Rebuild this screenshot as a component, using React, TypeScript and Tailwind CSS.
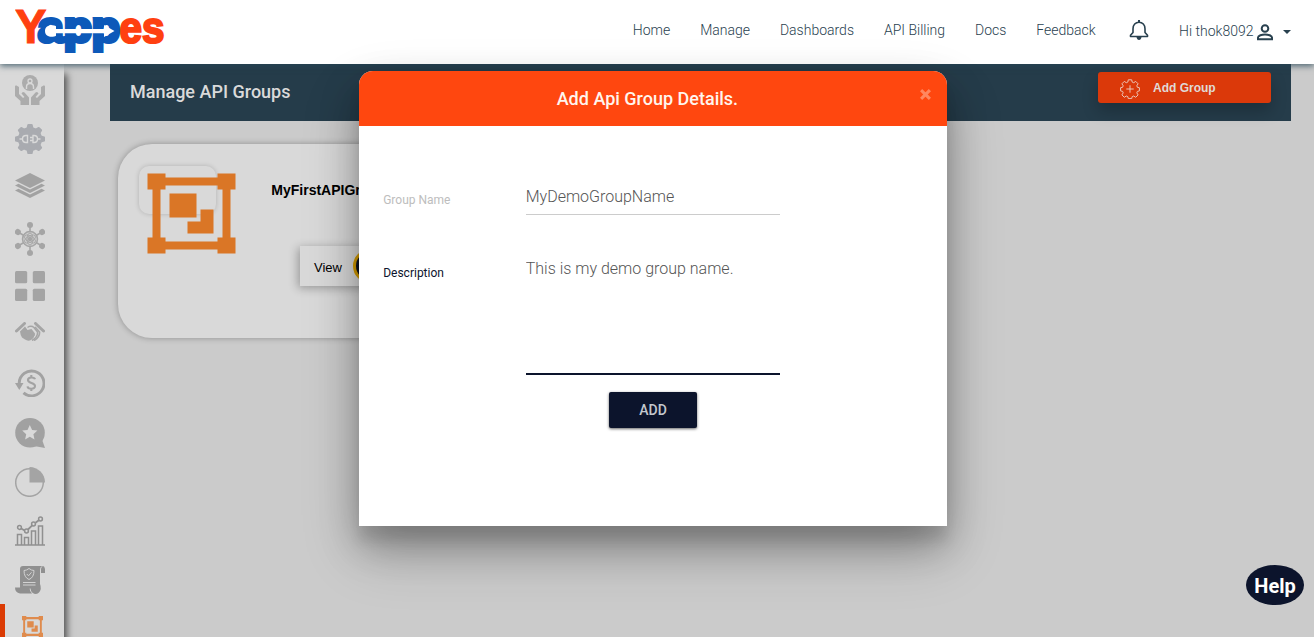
import React from "react";

const navItems = ["Home", "Manage", "Dashboards", "API Billing", "Docs", "Feedback"];

function Logo() {
  return (
    <svg width="160" height="64" viewBox="0 -8 160 64" className="block" aria-label="Yappes">
      <g fontFamily="Liberation Sans, sans-serif" fontWeight="700">
        <text x="0" y="34.500" fontSize="48" textLength="31.500" lengthAdjust="spacingAndGlyphs" fill="#ff4010" stroke="#ff4010" strokeWidth="1">Y</text>
        <text x="23" y="34.300" fontSize="43" textLength="82" lengthAdjust="spacingAndGlyphs" fill="#0d59b9" stroke="#0d59b9" strokeWidth="4">app</text>
        <text x="104.500" y="35" fontSize="44" textLength="45" lengthAdjust="spacingAndGlyphs" fill="#ff4010" stroke="#ff4010" strokeWidth="2.200">es</text>
      </g>
      <path d="M41 18.300C38 16.500 30 16.500 30 23s8 6.500 11 4.700V25.200H89v3.800l10.500-6L89 17v4H41Z" fill="#fff" />
    </svg>
  );
}

function GroupIcon({ className }: { className: string }) {
  return (
    <svg viewBox="0 0 88 80" preserveAspectRatio="none" className={className} fill="currentColor">
      <path fillRule="evenodd" d="M0 0h18v4h52V0h18v16h-5v48h5v16H70v-4H18v4H0V64h5V16H0ZM18 12v4h-5v48h5v4h52v-4h5V16h-5v-4Z" />
      <path d="M22 20h27v24H22ZM53 36h13v24H40V48h13Z" />
    </svg>
  );
}

function HandsIcon() {
  return (
    <svg viewBox="0 0 30 30" className="block h-[30px] w-[30px]" fill="#acacac">
      <circle cx="15" cy="8" r="8" />
      <circle cx="15" cy="6" r="2" fill="none" stroke="#d9d9d9" strokeWidth="1.300" />
      <path d="M11.500 14v-2q0-3.500 3.500-3.500t3.500 3.500v2" fill="none" stroke="#d9d9d9" strokeWidth="1.400" />
      <path d="M0 11.500Q0 10 1.500 10.500L4 12v7l4 4 1.500-1-3-3.500q1-2.500 3-1l4.500 5V30H5.500v-4L0 21ZM30 11.500q0-1.500-1.500-1L26 12v7l-4 4-1.500-1 3-3.500q-1-2.500-3-1L16 22.500V30h8.500v-4l5.500-5Z" />
    </svg>
  );
}

function PlugGearIcon() {
  return (
    <svg viewBox="0 0 30 30" className="block h-[30px] w-[30px]" fill="#a9abb0">
      <circle cx="15" cy="15" r="12" />
      {[0, 45, 90, 135, 180, 225, 270, 315].map((a) => (
        <path key={a} d="M11.300 5 12.400.6Q12.600 0 13.300 0h3.400q.7 0 .9.600L18.700 5Z" transform={`rotate(${a} 15 15)`} />
      ))}
      <g fill="none" stroke="#d9d9d9" strokeWidth="1.400">
        <path d="M4.500 15h3M12.500 11.500v7h-1.500q-3.500 0-3.500-3.500t3.500-3.500ZM25.500 15h-3M18 11.500v7h1q3.500 0 3.500-3.500T19 11.500ZM15 13.500h3M15 16.500h3" />
      </g>
    </svg>
  );
}

function LayersIcon() {
  return (
    <svg viewBox="0 0 30 25" className="block h-[25px] w-[30px]" fill="#a2a2a2">
      <path d="M15 0 30 7.500 15 15 0 7.500ZM0 12.500l3.500-1.700L15 16.500l11.500-5.700 3.500 1.700L15 20ZM0 17.500l3.500-1.700L15 21.500l11.500-5.700 3.500 1.700L15 25Z" />
    </svg>
  );
}

function NetworkIcon() {
  return (
    <svg viewBox="0 0 30 34" className="block h-[34px] w-[30px]">
      {[0, 60, 120, 180, 240, 300].map((a) => (
        <g key={a} transform={`rotate(${a} 15 17)`}>
          <path d="M15 3v7" stroke="#a5a5a5" strokeWidth="1.600" />
          <circle cx="15" cy="3" r="3" fill="#a5a5a5" />
        </g>
      ))}
      <circle cx="15" cy="17" r="7.500" fill="#cecece" stroke="#a5a5a5" strokeWidth="1.500" />
      <g fill="none" stroke="#a5a5a5" strokeWidth="1">
        <ellipse cx="15" cy="17" rx="3" ry="6" />
        <ellipse cx="15" cy="17" rx="3" ry="6" transform="rotate(60 15 17)" />
        <ellipse cx="15" cy="17" rx="3" ry="6" transform="rotate(120 15 17)" />
      </g>
      <circle cx="15" cy="17" r="2.200" fill="#a5a5a5" />
    </svg>
  );
}

function GridIcon() {
  return (
    <svg viewBox="0 0 30 30" className="block h-[30px] w-[30px]" fill="#a4a4a4">
      <rect width="12.200" height="12.200" rx="1.500" />
      <rect x="17.800" width="12.200" height="12.200" rx="1.500" />
      <rect y="17.800" width="12.200" height="12.200" rx="1.500" />
      <rect x="17.800" y="17.800" width="12.200" height="12.200" rx="1.500" />
    </svg>
  );
}

function HandshakeIcon() {
  return (
    <svg viewBox="0 0 30 19" className="block h-[19px] w-[30px]">
      <path d="M1.500 9 9.500 1.500M28.500 9l-8-7.500" stroke="#a5a5a5" strokeWidth="3" strokeLinecap="round" />
      <path d="M10 4.500 5 9.500q.5 4 2 6l3 2q3 2 6 .5l3-2.500q1.500-1.500 1-4L16.500 7l-4 1Z" fill="#a5a5a5" />
      <path d="M12.500 5.500Q16 3 19 5.500l3.500 4.500q.500 5-5.500 8.500" fill="none" stroke="#a5a5a5" strokeWidth="1.500" />
      <path d="M13 6.500q3-2 5 .5l2.500 3.500q.5 3-1.500 5" fill="none" stroke="#d9d9d9" strokeWidth="1" />
      <path d="m20 5 4.500 5q.5 5-5.500 8.500" fill="none" stroke="#a5a5a5" strokeWidth="1.700" />
    </svg>
  );
}

function RefundIcon() {
  return (
    <svg viewBox="0 0 30 28" className="block h-[28px] w-[30px]" fill="none" stroke="#a2a2a2">
      <path d="M4.200 14A12.400 12.400 0 1 1 8.500 23.800" strokeWidth="2.900" />
      <path d="M0 14h8.500l-4.200 7Z" fill="#a2a2a2" stroke="none" />
      <path d="M20 10.300C19.500 8 13 7.500 13 11c0 3.500 7 2.500 7 6 0 3.800-7 3.300-7.500.3M16.300 6v2.500M16.300 19v3" strokeWidth="2.100" />
    </svg>
  );
}

function StarChatIcon() {
  return (
    <svg viewBox="0 0 30 30" className="block h-[30px] w-[30px]" fill="#a1a1a1">
      <circle cx="15" cy="14.800" r="14.800" />
      <path d="m19 28 8-6.500 3 8.500Z" />
      <path d="m14.800 7 2.300 4.900 5.300.6-4 3.700 1.100 5.300-4.700-2.700-4.700 2.700 1.100-5.300-4-3.700 5.300-.6Z" fill="#d9d9d9" />
    </svg>
  );
}

function PieIcon() {
  return (
    <svg viewBox="0 0 30 30" className="block h-[30px] w-[30px]">
      <circle cx="14.500" cy="15.500" r="13.800" fill="none" stroke="#a4a4a4" strokeWidth="1.500" />
      <path d="M14.500 0A15.300 15.300 0 0 1 30 15.500H14.500Z" fill="#a4a4a4" />
    </svg>
  );
}

function AnalyticsIcon() {
  return (
    <svg viewBox="0 0 30 30" className="block h-[30px] w-[30px]" fill="none" stroke="#909090" strokeWidth="1.500">
      <path d="M0 29h30M2.500 29V18.500h4V29M9.500 29v-7.500h4V29M16.500 29V15h4v14M23.500 29V10h4v19" />
      <path d="m6.200 12.500 3.400 2M13 13.500l4.200-4.200M20.500 6.800l3.300-2.500" strokeWidth="1.800" />
      <circle cx="4.500" cy="11.500" r="1.900" />
      <circle cx="11.500" cy="15" r="1.900" />
      <circle cx="18.500" cy="8" r="1.900" />
      <circle cx="25.500" cy="3" r="1.900" />
    </svg>
  );
}

function PolicyIcon() {
  return (
    <svg viewBox="0 0 30 28" className="block h-[28px] w-[30px]" fill="#909090">
      <path d="M8 0h19q-2 1-2 4v14q2 5-1 8.500-1.500 1.500-4 1.500-4-1-4.500-5.500H5V3q0-3 3-3ZM26 7V3q.5-3 2-3t2 3v4ZM0 21.500h14.500q0 4 2.500 6H5q-5-1-5-6Z" />
      <path d="M14 2.500q2.500 2 5 2 0 7-5 9-5-2-5-9 2.500 0 5-2ZM11.800 8l1.700 1.800 3-3.500M8 16.500h12.500M8 19h12.500" fill="none" stroke="#d2d2d2" strokeWidth="1" />
    </svg>
  );
}

function Sidebar() {
  return (
    <aside className="relative h-[573px] w-16 shrink-0 bg-[#d9d9d9] shadow-[3px_10px_7px_rgba(0,0,0,0.6)]">
      <nav className="flex h-full flex-col overflow-hidden pl-[15px] pt-[11px]">
        <div><HandsIcon /></div>
        <div className="mt-[19px]"><PlugGearIcon /></div>
        <div className="mt-[19px]"><LayersIcon /></div>
        <div className="mt-6"><NetworkIcon /></div>
        <div className="mt-[15px]"><GridIcon /></div>
        <div className="mt-[21px]"><HandshakeIcon /></div>
        <div className="mt-7"><RefundIcon /></div>
        <div className="mt-[21px]"><StarChatIcon /></div>
        <div className="mt-[19px]"><PieIcon /></div>
        <div className="mt-[19px]"><AnalyticsIcon /></div>
        <div className="mt-5"><PolicyIcon /></div>
        <div className="-ml-[15px] mt-2.5 h-[33px] shrink-0 border-l-[5px] border-[#db3b04] pl-[17px] pt-3">
          <GroupIcon className="block h-[21px] w-[21px] text-[#df8b4d]" />
        </div>
      </nav>
    </aside>
  );
}

function Header() {
  return (
    <header className="relative z-10 flex h-16 bg-white pl-[15px] font-light text-[#29414f] shadow-[0_2px_6px_rgba(38,70,85,0.75)]">
      <div className="w-[617.800px] shrink-0"><Logo /></div>
      <nav className="flex gap-[29.950px] pt-5 text-[14px] leading-5">
        {navItems.map((item) => (
          <a key={item} className="whitespace-nowrap">{item}</a>
        ))}
      </nav>
      <svg viewBox="0 0 20 20" className="ml-[33.200px] mt-5 h-5 w-5" fill="none" stroke="#29414f" strokeWidth="1.600">
        <path d="M1.500 16.500h17v-1.200L16 12.500V8.700C16 5 13.500 2.200 10 2.200S4 5 4 8.700v3.800l-2.500 2.800Z" strokeLinejoin="round" />
        <path d="M10 0v2" strokeWidth="2" />
        <path d="M7.500 17h5q-.5 3-2.500 3t-2.500-3" fill="#29414f" stroke="none" />
      </svg>
      <div className="ml-[30.200px] flex pt-[21px] text-[14px] leading-5">
        <span className="whitespace-nowrap">Hi thok8092</span>
        <svg viewBox="0 0 18 17" className="ml-[2.500px] mt-[2.500px] h-[17px] w-[18px]" fill="none" stroke="#29414f" strokeWidth="2">
          <circle cx="9" cy="4.500" r="3.300" />
          <path d="M2 15.200v-1.600c0-2 4-3.200 7-3.200s7 1.200 7 3.200v1.600Z" />
        </svg>
        <svg viewBox="0 0 8 4" className="ml-[9px] mt-[9px] h-1 w-2" fill="#29414f"><path d="M0 0h8L4 4Z" /></svg>
      </div>
    </header>
  );
}

function ApiGroupCard() {
  return (
    <section className="ml-2 mt-[23px] flex h-[194px] w-[390px] rounded-[34px] bg-[#d9d9d9] shadow-[0_0_6px_rgba(0,0,0,0.3)]">
      <div className="ml-[21px] mt-[22px] h-12 w-[77px] shrink-0 rounded-[10px] shadow-[0_0_5px_rgba(0,0,0,0.18)]">
        <div className="pl-2 pt-[7px]">
          <svg viewBox="0 0 89 81" className="block h-[81px] w-[89px] overflow-visible" fill="#da7626">
            <path fillRule="evenodd" d="M.5.5h18v4h52v-4h18v16h-5v48h5v16h-18v-4h-52v4H.5v-16h5v-48h-5ZM18.500 12.500v4h-5v48h5v4h52v-4h5v-48h-5v-4Z" />
            <path d="M22.500 20.500h27v24h-27ZM53.500 36.500h13v24h-26v-12h13Z" />
          </svg>
        </div>
      </div>
      <div className="ml-[55.300px] pt-9 font-['Liberation_Sans',sans-serif] text-black">
        <h2 className="whitespace-nowrap text-[14px] font-bold leading-5">MyFirstAPIGroup</h2>
        <div className="ml-[28.700px] mt-[46px] flex h-10 w-[110px] items-center bg-[#d9d9d9] pl-3.5 text-[13px] shadow-[-2px_2px_9px_rgba(0,0,0,0.3)]">
          <span className="pt-1">View</span>
          <span className="ml-[11px] h-[34px] w-[34px] rounded-full border-[3px] border-[#d59c00] bg-[#0c1329]" />
        </div>
      </div>
    </section>
  );
}

function AddGroupButton() {
  return (
    <button className="mr-5 mt-2 flex h-[31px] w-[173px] items-center rounded-[3px] bg-[#db390a] pl-[22px] font-['Liberation_Sans',sans-serif] text-[12px] font-bold text-[#e0d9d6] shadow-[0_8px_16px_rgba(0,0,0,0.22)]">
      <svg viewBox="0 0 20 20" className="mt-[3px] h-5 w-5" fill="none" stroke="#ecc4b6">
        <path d="M8.300.8h3.400l.5 2.300 1.500.6 2-1.300 2.400 2.400-1.300 2 .6 1.500 2 .4v3.200l-2 .5-.6 1.500 1.300 2-2.400 2.400-2-1.300-1.500.6-.5 2H8.300l-.5-2-1.500-.6-2 1.300-2.400-2.400 1.300-2-.6-1.500-2-.5V8.700l2-.4.6-1.500-1.300-2 2.400-2.400 2 1.300 1.500-.6Z" />
        <path d="M10 6.300v7.400M6.300 10h7.400" />
      </svg>
      <span className="ml-[13px]">Add Group</span>
    </button>
  );
}

function AddGroupDialog() {
  return (
    <div role="dialog" className="absolute left-[359px] top-[71px] z-20 flex h-[455px] w-[588px] flex-col rounded-t-[14px] bg-white shadow-[0_19px_38px_rgba(0,0,0,0.26),0_15px_12px_rgba(0,0,0,0.07),0_26px_60px_rgba(0,0,0,0.20)]">
      <div className="flex h-[55px] shrink-0 rounded-t-[14px] bg-[#ff470f]">
        <h2 className="ml-[197.700px] mt-4 w-[363.800px] text-[18px] font-medium leading-6 text-[#fff5ed]">Add Api Group Details.</h2>
        <svg viewBox="0 0 10 10" className="mt-[18px] h-[11px] w-[11px]" stroke="#ff8760" strokeWidth="2.800"><path d="m1 1 8 8M9 1 1 9" /></svg>
      </div>
      <form className="flex flex-1 flex-col pl-[24.200px]">
        <div className="mt-[53px] flex h-9">
          <label className="w-[142.500px] pt-[13px] text-[12px] leading-4 text-[#bdbdbd]">Group Name</label>
          <input className="h-9 w-[254px] border-b border-[#cccccc] bg-transparent text-[16px] font-light text-[#555] outline-none" defaultValue="MyDemoGroupName" />
        </div>
        <div className="mt-[41px] flex h-[119px]">
          <label className="w-[142.500px] pt-[9px] text-[12px] leading-4 text-[#0c142c]">Description</label>
          <textarea className="h-[119px] w-[254px] resize-none border-b-2 border-[#0c142c] bg-transparent pt-0.5 text-[16px] font-light leading-[22px] text-[#555] outline-none" defaultValue="This is my demo group name." />
        </div>
        <button type="button" className="ml-[225.800px] mt-[17px] h-9 w-[88px] rounded-[2px] bg-[#0c142c] text-[14px] font-medium text-[#c4c8ce] shadow-[0_1px_3px_rgba(0,0,0,0.6)]">ADD</button>
      </form>
    </div>
  );
}

export default function App() {
  return (
    <div className="relative h-[637px] w-[1314px] overflow-hidden bg-[#cbcbcb] font-[Roboto,sans-serif]">
      <Header />
      <div className="flex">
        <Sidebar />
        <main className="ml-[46px] w-[1181px]">
          <div className="flex h-[57px] justify-between bg-[#253c4a]">
            <h1 className="ml-5 mt-4 text-[18px] font-medium leading-6 text-[#dadada]">Manage API Groups</h1>
            <AddGroupButton />
          </div>
          <ApiGroupCard />
        </main>
      </div>
      <AddGroupDialog />
      <button className="absolute left-[1246px] top-[565px] z-20 h-10 w-[58px] rounded-[50%] bg-[#0c142c] pt-px text-[20px] font-bold leading-10 text-white">Help</button>
    </div>
  );
}
